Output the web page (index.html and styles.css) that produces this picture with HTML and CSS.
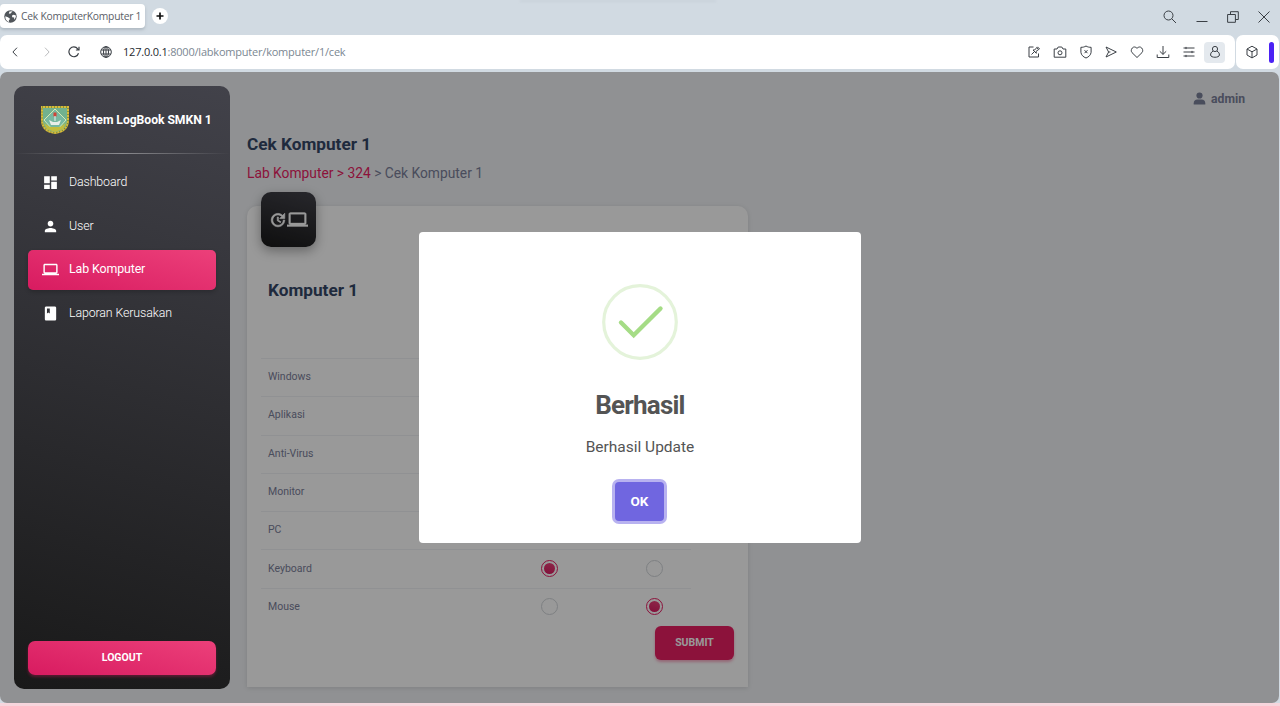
FILE: index.html
```html
<!DOCTYPE html>
<html lang="id">
<head>
<meta charset="utf-8">
<title>Cek KomputerKomputer 1</title>
<link rel="stylesheet" href="styles.css">
</head>
<body>
<div class="browser">
  <header class="tabbar">
    <div class="tab">
      <svg class="tab-icon" width="13" height="13" viewBox="0 0 13 13"><circle cx="6.5" cy="6.5" r="6.2" fill="#50555a"/><path d="M1.300 6.200 4 7.200 6.300 9 4.900 10 5 12C2.800 11.200 1 9 1.300 6.200ZM5.500 1.400 8.600 1.200C7.800 2.500 6.600 3 6.300 3.800L4.800 3.600ZM11.900 5.600 9.700 4.700 8 5.500 8.200 7.300 10.200 7.500 10.100 9.700C11.400 8.700 12 7.100 11.900 5.600Z" fill="#fff"/></svg>
      <span class="tab-title">Cek KomputerKomputer 1</span>
    </div>
    <div class="newtab"><svg width="16" height="16" viewBox="0 0 16 16" stroke="#111" stroke-width="1.700"><path d="M8 4.500v7M4.500 8h7"/></svg></div>
    <div class="winctl">
      <svg width="14" height="14" viewBox="0 0 14 14" class="ln"><circle cx="5.500" cy="5.500" r="4.500"/><path d="M8.700 8.700l4.300 4.300"/></svg>
      <svg width="12" height="14" viewBox="0 0 12 14" class="ln"><path d="M.5 11.500h11"/></svg>
      <svg width="12" height="12" viewBox="0 0 12 12" class="ln"><path d="M.6 3.500h7.800v7.800H.6zM3.500 3.500V.7h7.800v7.800H8.400"/></svg>
      <svg width="12" height="12" viewBox="0 0 12 12" class="ln"><path d="M.5.5l11 11M11.500.5l-11 11"/></svg>
    </div>
    <i class="topshade"></i>
  </header>
  <div class="toolbar">
    <div class="addressbar">
      <svg class="ln back" width="6" height="10" viewBox="0 0 6 10"><path d="M5 .7.9 5 5 9.300"/></svg>
      <svg class="ln fwd" width="6" height="10" viewBox="0 0 6 10"><path d="M1 .7 5.100 5 1 9.300"/></svg>
      <svg class="ln reload" width="12" height="12" viewBox="0 0 12 12"><path d="M10.500 7.300A4.900 4.900 0 1 1 9.700 2.800L10.900 4M11 .8V4H7.900"/></svg>
      <svg class="ln globe" width="12" height="12" viewBox="0 0 12 12"><circle cx="6" cy="6" r="5.300"/><ellipse cx="6" cy="6" rx="2.500" ry="5.300"/><path d="M1.300 4h9.400M1.300 8h9.400M6 .7v10.600"/></svg>
      <span class="url"><b>127.0.0.1</b>:8000/labkomputer/komputer/1/cek</span>
      <div class="tools">
        <svg class="ln" viewBox="0 0 14 14"><path d="M6.500 2H2v10h9.500V8.500M4.500 9.500 7 7M6 5l3.300 3.300L9 6.500l2.500-2L9.800 2.600 7.600 5zM9.800 2.600l.7-.7 2 2-.9.800"/></svg>
        <svg class="ln" viewBox="0 0 14 14"><path d="M1.200 4H4l1.200-2h3.600L10 4h2.800v8.200H1.200z"/><circle cx="7" cy="7.800" r="2"/></svg>
        <svg class="ln" viewBox="0 0 14 14"><path d="M7 1C5.500 2 3.500 2.400 1.900 2.300v5C2.200 10 4.300 12 7 13c2.700-1 4.800-3 5.100-5.700v-5C10.500 2.400 8.500 2 7 1ZM5.500 5.200l3 3M8.500 5.200l-3 3"/></svg>
        <svg class="ln" viewBox="0 0 14 14"><path d="M2 2 12.300 7 2 12 4.600 7zM4.600 7h1.800"/></svg>
        <svg class="ln" viewBox="0 0 14 14"><path d="M7 12.500 2 7.600C-.4 4.800 3.600-.6 7 3.400c3.400-4 7.400 1.400 5 4.200z"/></svg>
        <svg class="ln" viewBox="0 0 14 14"><path d="M7 1v8.300M3.800 6.300 7 9.400l3.200-3.100M1.200 9.500v3h11.600v-3"/></svg>
        <svg class="ln" viewBox="0 0 14 14"><path d="M1.500 3h11M1.500 7h11M1.500 11h11M4 1.900v2.200M10 5.900v2.200M4 9.900v2.200"/></svg>
        <span class="profile"><svg class="ln" viewBox="0 0 14 14"><circle cx="7" cy="4" r="2.600"/><path d="M5 6.200C3 7.200 2.600 8.500 2.600 10c0 3 8.800 3 8.800 0C11.400 8.500 11 7.200 9 6.200"/></svg></span>
      </div>
    </div>
    <div class="sidebox">
      <svg class="ln" width="14" height="14" viewBox="0 0 14 14"><path d="M7 1.200 12 4v6l-5 2.900L2 10V4zM2 4l5 2.800L12 4M7 6.800v6"/></svg>
      <i></i>
    </div>
  </div>

  <div class="page">
    <aside class="sidebar">
      <div class="brand">
        <svg width="28" height="28" viewBox="0 0 28 28"><path d="M1 1h26v13c0 8-5.500 12-13 13C6.500 26 1 22 1 14z" fill="#72b18e" stroke="#d9b93a" stroke-width="2"/><path d="M1 1h26v13c0 8-5.500 12-13 13C6.500 26 1 22 1 14z" fill="none" stroke="#6f8a3a" stroke-width="1.500" stroke-dasharray="1 2"/><path d="M3 14 14 3l11 11-8 9h-6z" fill="#77b8a0" stroke="#d7e9b4"/><path d="M3 17l6 4h10l6-4-3 6-8 3-8-3z" fill="#c3bd3d"/><path d="M8 14l4 2h4l4-2-2 5h-8z" fill="#e9eee9"/><path d="M12.500 6.500h3v4h-3z" fill="#cf4336"/><path d="M14 10v5" stroke="#eee"/></svg>
        <span>Sistem LogBook SMKN 1</span>
      </div>
      <hr class="rule">
      <nav class="menu">
        <a class="item"><svg viewBox="0 0 24 24"><path d="M3 13h8V3H3zM3 21h8v-6H3zM13 21h8V11h-8zM13 3v6h8V3z"/></svg><span>Dashboard</span></a>
        <a class="item"><svg viewBox="0 0 24 24"><path d="M12 12c2.210 0 4-1.790 4-4s-1.790-4-4-4-4 1.790-4 4 1.790 4 4 4zm0 2c-2.670 0-8 1.340-8 4v2h16v-2c0-2.660-5.330-4-8-4z"/></svg><span>User</span></a>
        <a class="item active"><svg viewBox="0 0 24 24"><path d="M20 18c1.100 0 1.990-.9 1.990-2L22 6c0-1.100-.9-2-2-2H4c-1.100 0-2 .9-2 2v10c0 1.100.9 2 2 2H0v2h24v-2h-4zM4 6h16v10H4V6z"/></svg><span>Lab Komputer</span></a>
        <a class="item"><svg viewBox="0 0 24 24"><path d="M18 2H6c-1.100 0-2 .9-2 2v16c0 1.100.9 2 2 2h12c1.100 0 2-.9 2-2V4c0-1.100-.9-2-2-2zM7 5h4v7l-2-1.300L7 12V5z"/></svg><span>Laporan Kerusakan</span></a>
      </nav>
      <button class="logout">LOGOUT</button>
    </aside>

    <main class="content">
      <div class="account"><svg width="13" height="13" viewBox="0 0 13 13"><circle cx="6.500" cy="3.500" r="3.100"/><path d="M.7 12.500v-1.300C.7 9 2.300 7.600 4.300 7.600h4.400c2 0 3.600 1.400 3.600 3.600v1.300z"/></svg><span>admin</span></div>
      <h1>Cek Komputer 1</h1>
      <p class="crumbs"><a>Lab Komputer &gt; 324</a> &gt; Cek Komputer 1</p>
      <section class="card">
        <div class="badge">
          <svg width="18" height="18" viewBox="0 0 24 24"><path d="M21 10.120h-6.780l2.740-2.820c-2.730-2.700-7.150-2.800-9.880-.1-2.730 2.710-2.730 7.080 0 9.790s7.150 2.710 9.880 0C18.320 15.650 19 14.080 19 12.100h2c0 1.980-.88 4.550-2.640 6.290-3.510 3.480-9.210 3.480-12.720 0-3.500-3.470-3.530-9.110-.02-12.580s9.140-3.470 12.650 0L21 3v7.120zM12.500 8v4.250l3.500 2.080-.72 1.210L11 13V8h1.500z" stroke="#fff" stroke-width=".9"/></svg>
          <svg width="21" height="21" viewBox="0 0 24 24"><path d="M20 18c1.100 0 1.990-.9 1.990-2L22 6c0-1.100-.9-2-2-2H4c-1.100 0-2 .9-2 2v10c0 1.100.9 2 2 2H0v2h24v-2h-4zM4 6h16v10H4V6z" stroke="#fff" stroke-width=".4"/></svg>
        </div>
        <h2>Komputer 1</h2>
        <div class="rows">
          <div class="row"><span>Windows</span></div>
          <div class="row"><span>Aplikasi</span></div>
          <div class="row"><span>Anti-Virus</span></div>
          <div class="row"><span>Monitor</span></div>
          <div class="row"><span>PC</span></div>
          <div class="row"><span>Keyboard</span><i class="radio on"></i><i class="radio"></i></div>
          <div class="row"><span>Mouse</span><i class="radio"></i><i class="radio on"></i></div>
        </div>
        <button class="submit">SUBMIT</button>
      </section>
    </main>

    <div class="overlay">
      <div class="modal">
        <svg class="check" width="76" height="76" viewBox="0 0 76 76" fill="none"><circle cx="38" cy="38" r="36.300" stroke="#e4f3da" stroke-width="3.200"/><path d="M19 38.500 31.700 51.200 58.500 24.500" stroke="#a5dc86" stroke-width="4.400" stroke-linecap="round"/></svg>
        <h3>Berhasil</h3>
        <p>Berhasil Update</p>
        <button class="ok">OK</button>
      </div>
    </div>
  </div>
</div>
</body>
</html>
```
FILE: styles.css
```css
* { box-sizing: border-box; }
body { margin: 0; font-family: Roboto, sans-serif; overflow: hidden; }
h1, h2, h3, p { margin: 0; }
button { border: 0; padding: 0; font-family: inherit; font-weight: 700; color: #fff; }
.browser { width: 1280px; height: 706px; background: #d1dae2; border-bottom: 3px solid #f7d5dc; overflow: hidden; }
.ln { fill: none; stroke: #3a3f45; stroke-width: 1; }

.tabbar { position: relative; height: 35px; display: flex; align-items: flex-start; }
.tab { display: flex; align-items: center; gap: 4px; width: 145px; height: 24px; margin-top: 4px; padding-left: 4px; background: #fff; border-radius: 4px; box-shadow: 0 2px 3px #8e99a480; }
.tab-icon { flex: none; }
.tab-title { font: 10.300px "Open Sans", sans-serif; color: #5b6068; white-space: nowrap; letter-spacing: -.24px; }
.newtab { width: 16px; height: 16px; margin: 8px 0 0 7px; border-radius: 50%; background: #fff; }
.newtab svg { display: block; }
.winctl { display: flex; align-items: center; gap: 19px; margin: 9px 10px 0 auto; height: 15px; }
.topshade { position: absolute; left: 520px; top: 0; width: 196px; height: 2px; background: #c8d1da; filter: blur(1px); }

.toolbar { display: flex; gap: 1px; height: 34px; margin-bottom: 3px; }
.addressbar { width: 1235px; display: flex; align-items: center; background: #fff; border-radius: 7px; }
.back { margin-left: 12px; }
.fwd { margin-left: 26px; opacity: .35; }
.reload { margin-left: 18px; stroke-width: 1.200; }
.globe { margin-left: 20px; }
.url { margin: -1px 0 0 11px; font: 11px "Open Sans", sans-serif; letter-spacing: -.21px; color: #7b8792; white-space: nowrap; }
.url b { font-weight: 400; color: #25292e; }
.tools { margin: 0 10px 0 auto; display: flex; align-items: center; gap: 11.900px; }
.tools svg { width: 14px; height: 14px; display: block; }
.profile { width: 21px; height: 21px; margin-left: -4px; display: grid; place-items: center; background: #e4e9ee; border-radius: 4px; }
.sidebox { width: 43px; display: flex; align-items: center; justify-content: space-between; padding: 0 5px 0 9px; background: #fff; border-radius: 7px; }
.sidebox i { width: 5px; height: 21px; border-radius: 3px; background: #4b22f4; }

.page { position: relative; width: 1279px; height: 631px; display: flex; gap: 17px; padding: 14px; background: #f0f2f5; border-radius: 7px; overflow: hidden; }
.sidebar { position: relative; z-index: 2; width: 216px; height: 603px; flex: none; padding: 0 14px 14px; display: flex; flex-direction: column; border-radius: 10px; background: linear-gradient(195deg, #42424a, #191919); }
.brand { display: flex; align-items: center; gap: 6.500px; height: 67px; padding-left: 13px; color: #fff; font-size: 12.200px; font-weight: 700; letter-spacing: -.06px; white-space: nowrap; }
.brand svg { flex: none; }
.rule { height: 1px; border: 0; margin: 0 -14px 9px; background: linear-gradient(90deg, #fff0, #ffffff66, #fff0); }
.menu { display: flex; flex-direction: column; gap: 3.500px; }
.item { display: flex; align-items: center; height: 40px; padding-left: 14px; gap: 10px; border-radius: 5px; color: #fff; font-size: 12.400px; font-weight: 300; letter-spacing: -.12px; white-space: nowrap; }
.item svg { width: 17px; height: 17px; fill: #fff; margin-top: -1px; }
.item span { margin-top: -3px; }
.active { background: linear-gradient(195deg, #ec407a, #d81b60); font-weight: 400; box-shadow: 0 2px 4px #0003; }
.logout { margin-top: auto; height: 34px; padding-bottom: 1px; border-radius: 7px; background: linear-gradient(195deg, #ec407a, #d81b60); font-size: 10.500px; box-shadow: 0 2px 3px #e91e6350; }

.content { flex: 1; display: flex; flex-direction: column; align-items: flex-start; color: #7b809a; }
.account { align-self: flex-end; display: flex; align-items: center; gap: 5px; height: 25px; margin-right: 20px; font-size: 12.200px; font-weight: 700; }
.account svg { fill: #7b809a; }
h1, h2 { color: #344767; font-size: 17.200px; line-height: 24px; font-weight: 700; }
h1 { margin-top: 21px; }
.crumbs { margin-top: 7px; font-size: 13.800px; line-height: 20px; white-space: nowrap; }
.crumbs a { color: #e91e63; }
.card { width: 501px; height: 481px; flex: none; margin-top: 23px; padding: 0 14px; background: #fff; border-radius: 10px 10px 0 0; box-shadow: 0 1px 5px #0000001f; }
.badge { width: 55px; height: 55px; margin-top: -14px; display: flex; align-items: center; justify-content: center; border-radius: 10px; background: linear-gradient(195deg, #42424a, #191919); box-shadow: 0 4px 12px #0005; }
.badge svg { fill: #fff; }
.card h2 { margin: 31px 0 56px 7px; }
.rows { width: 430px; }
.row { display: grid; grid-template-columns: 235px 105px 90px; align-items: center; height: 38.300px; border-top: 1px solid #f0f2f5; font-size: 10.500px; }
.row span { padding-left: 7px; margin-top: -2px; }
.radio { width: 17px; height: 17px; margin: -1px 0 0 44.500px; border: 1px solid #d2d6da; border-radius: 50%; }
.on { border-color: #e91e63; padding: 2px; background: linear-gradient(195deg, #ec407a, #d81b60) content-box; }
.submit { display: block; width: 79px; height: 34px; margin: 0 0 0 auto; padding-bottom: 1px; border-radius: 6px; background: #e91e63; font-size: 10.500px; box-shadow: 0 2px 3px #e91e6360; }

.overlay { position: absolute; z-index: 1; inset: 0; display: flex; align-items: center; justify-content: center; background: #0006; }
.modal { width: 442px; height: 311px; margin-left: 1px; display: flex; flex-direction: column; align-items: center; padding-top: 51.500px; background: #fff; border-radius: 4px; }
.check { flex: none; }
h3 { margin-top: 29.500px; font-size: 26px; line-height: 32px; font-weight: 700; letter-spacing: -.8px; color: #545454; }
.modal p { margin-top: 16px; font-size: 15.500px; line-height: 20px; color: #545454; }
.ok { width: 49px; height: 39px; margin: 25px 1px 0 0; padding-bottom: 1px; border-radius: 4px; background: #7066e0; font-size: 13.500px; box-shadow: 0 0 0 3px #b8b2f0; }
```
